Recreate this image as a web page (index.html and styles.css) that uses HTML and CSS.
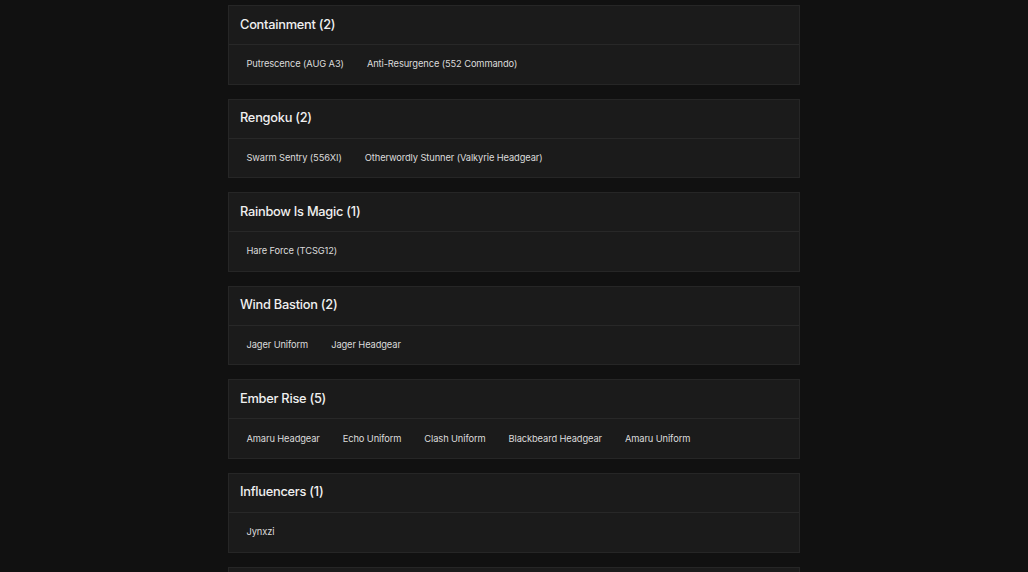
FILE: index.html
```html
<!DOCTYPE html>
<html>
<head>
<meta charset="utf-8">
<link rel="stylesheet" href="styles.css">
</head>
<body>
<main class="list">
  <section class="card">
    <h2 class="card-title">Containment (2)</h2>
    <div class="card-body"><span class="item">Putrescence (AUG A3)</span><span class="item">Anti-Resurgence (552 Commando)</span></div>
  </section>
  <section class="card">
    <h2 class="card-title">Rengoku (2)</h2>
    <div class="card-body"><span class="item">Swarm Sentry (556XI)</span><span class="item">Otherwordly Stunner (Valkyrie Headgear)</span></div>
  </section>
  <section class="card">
    <h2 class="card-title">Rainbow Is Magic (1)</h2>
    <div class="card-body"><span class="item">Hare Force (TCSG12)</span></div>
  </section>
  <section class="card">
    <h2 class="card-title">Wind Bastion (2)</h2>
    <div class="card-body"><span class="item">Jager Uniform</span><span class="item">Jager Headgear</span></div>
  </section>
  <section class="card">
    <h2 class="card-title">Ember Rise (5)</h2>
    <div class="card-body"><span class="item">Amaru Headgear</span><span class="item">Echo Uniform</span><span class="item">Clash Uniform</span><span class="item">Blackbeard Headgear</span><span class="item">Amaru Uniform</span></div>
  </section>
  <section class="card">
    <h2 class="card-title">Influencers (1)</h2>
    <div class="card-body"><span class="item">Jynxzi</span></div>
  </section>
  <section class="card card-last">
    <h2 class="card-title">&nbsp;</h2>
  </section>
</main>
</body>
</html>
```

FILE: styles.css
```css
html, body {
  margin: 0;
  padding: 0;
  background: #111111;
}
body {
  font-family: "Inter", "Open Sans", "Liberation Sans", sans-serif;
  color: #e8e8e8;
}
.list {
  width: 572px;
  margin: 0 auto;
  padding-top: 5px;
  display: flex;
  flex-direction: column;
  gap: 14px;
}
.card {
  background: #1b1b1b;
  border: 1px solid #262626;
  height: 79.6px;
  box-sizing: border-box;
  display: flex;
  flex-direction: column;
}
.card-title {
  margin: 0;
  height: 39px;
  box-sizing: border-box;
  padding: 0 11px 2px;
  display: flex;
  align-items: center;
  font-size: 12.8px;
  font-weight: 500;
  letter-spacing: -0.25px;
  color: #f0f0f0;
  border-bottom: 1px solid #282828;
}
.card-body {
  flex: 1;
  display: flex;
  align-items: center;
  padding: 0 6px 1px;
}
.item {
  font-size: 9.3px;
  font-weight: 400;
  letter-spacing: -0.1px;
  color: #dcdcdc;
  padding: 0 11.5px;
}
```
